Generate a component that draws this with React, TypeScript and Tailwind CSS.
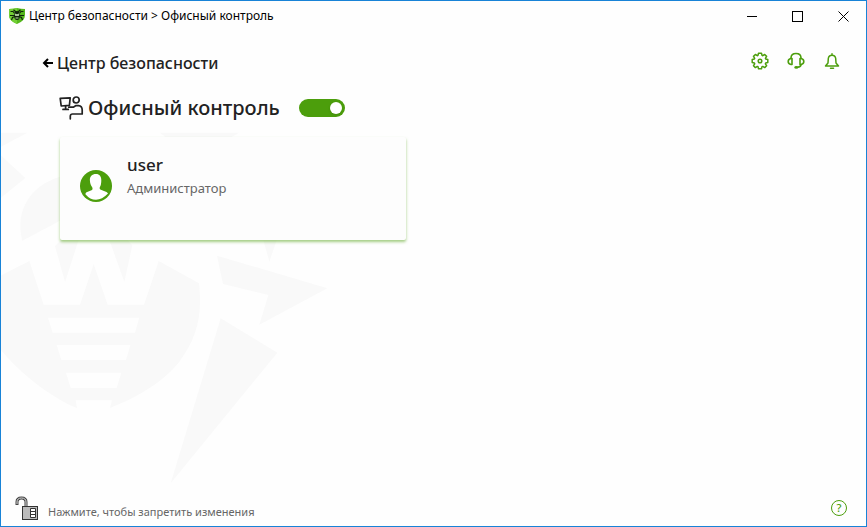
import { useState } from "react";
import type { ReactNode } from "react";

function Watermark() {
  return (
    <svg className="pointer-events-none absolute left-0 top-[131px] h-[352px] w-[328px]" viewBox="3 36 984 1056" fill="#f9f9f9" aria-hidden="true">
      <path d="M0 38H82L0 82Z" />
      <path d="M0 104L76 174L0 236Z" />
      <path d="M67 362C42 270 95 195 180 170V302Z" />
      <path d="M480 38H717L690 54H500Z" />
      <path d="M790 360H830L808 425Z" />
      <path d="M165 378L183 360H236L195 486Z" />
      <path d="M328 360H382L397 376L373 486Z" />
      <path
        fillRule="evenodd"
        d="M0 468L88 423L131 554H240L281 432L323 554H432L476 423L597 490C608 590 590 655 536 728C480 795 400 836 330 864L336 841H227L231 864C150 830 60 760 0 686ZM144 593L158 638H405L418 593ZM170 675L184 720H378L391 675ZM198 758L212 804H350L364 758Z"
      />
      <path d="M651 407L982 505L778 614L805 525L669 492Z" />
      <path d="M662 595L832 698L512 1090Z" />
    </svg>
  );
}

function ShieldLogo() {
  return (
    <svg width="16" height="16" viewBox="0 0 16 16" aria-hidden="true">
      <path d="M0 1Q4 1 8 0Q12 1 16 1V7Q16 13 8 16Q0 13 0 7Z" fill="#55b81c" />
      <path d="M0 1Q4 1 8 0V16Q0 13 0 7Z" fill="#72cf35" />
      <path d="M1.5 3.5L4 3.5L6 6M1 7.5H6M2.5 12L3.5 9.5L6 8.5M14.5 3.5L12 3.5L10 6M15 7.5H10M13.5 12L12.5 9.5L10 8.5M4.5 1.8L7 4M11.5 1.8L9 4" fill="none" stroke="#10240a" strokeWidth="1.2" />
      <ellipse cx="8" cy="7.5" rx="2.8" ry="4.5" fill="#10240a" />
      <path d="M6 5.5L7 8L8 6L9 8L10 5.5M6.5 10H9.5" fill="none" stroke="#d5f7c2" strokeWidth="0.9" />
    </svg>
  );
}

function OfficeIcon() {
  return (
    <svg width="26" height="24" viewBox="0 0 26 24" fill="none" stroke="#222" strokeWidth="1.7" strokeLinejoin="round" strokeLinecap="round" aria-hidden="true">
      <path d="M1.2 2.3L11.2 1.9L10.4 9.4L2.2 10Z" />
      <path d="M6.6 10V13M4 13.4H9.3" />
      <circle cx="17.2" cy="4" r="3" />
      <path d="M9.8 11.200H14.300L17 9.600H19.500Q23.200 10 23.200 14V18H13.500Q11.500 18 11.300 20V22.800" />
    </svg>
  );
}

function GearIcon() {
  return (
    <svg width="18" height="18" viewBox="0 0 18 18" fill="none" stroke="currentColor" strokeWidth="1.5" strokeLinejoin="round" aria-hidden="true">
      <path d="M7.5 1.2H10.5L11 3.400L11.800 3.700L13.700 2.500L15.600 4.400L14.400 6.300L14.700 7L16.800 7.500V10.500L14.700 11L14.400 11.800L15.600 13.700L13.700 15.600L11.800 14.400L11 14.700L10.500 16.800H7.500L7 14.700L6.300 14.400L4.400 15.600L2.500 13.700L3.700 11.800L3.400 11L1.200 10.500V7.500L3.400 7L3.700 6.300L2.500 4.400L4.400 2.500L6.300 3.700L7 3.400Z" />
      <circle cx="9" cy="9" r="1.8" />
    </svg>
  );
}

function HeadsetIcon() {
  return (
    <svg width="18" height="18" viewBox="0 0 18 18" fill="none" stroke="currentColor" strokeWidth="1.6" strokeLinejoin="round" aria-hidden="true">
      <path d="M4 7V6Q4 1.5 9 1.5Q14 1.5 14 6V7" />
      <path d="M5 6.5V12.5H4Q1.2 12 1.2 9.5Q1.2 7 4 6.5ZM13 6.5V12.5H14Q16.8 12 16.8 9.5Q16.8 7 14 6.5Z" />
      <path d="M14 12.5Q14 15 10.5 15.2" />
      <ellipse cx="9.3" cy="15.4" rx="2" ry="1.3" fill="currentColor" stroke="none" />
    </svg>
  );
}

function BellIcon() {
  return (
    <svg width="18" height="18" viewBox="0 0 18 18" fill="none" stroke="currentColor" strokeWidth="1.5" strokeLinejoin="round" strokeLinecap="round" aria-hidden="true">
      <path d="M9 1.8V3M2.5 14H15.5L13 11L12.700 6.500Q12.300 3.200 9 3.200Q5.700 3.200 5.300 6.500L5 11Z" />
      <path d="M7.500 16.200H10.500" />
    </svg>
  );
}

function AvatarIcon() {
  return (
    <svg width="32" height="32" viewBox="0 0 32 32" aria-hidden="true">
      <circle cx="16" cy="16" r="16" fill="#4c9e0c" />
      <path
        d="M16 4C12 4 9.600 6.500 9.900 10.500C10.100 14 11 15.500 12.200 17.200C12.700 18.600 12.800 19.500 11.500 20.200L6.500 22.200Q5.500 22.800 5.400 24.300Q10 29.800 16 29.800Q22 29.800 28 23.600Q27.500 22.500 26.500 22L20.800 19.700C19.500 19 19.500 18 19.800 17.200C21 15.500 21.200 13.500 21.300 10.500C21.400 6.500 19.500 4 16 4Z"
        fill="#fff"
      />
    </svg>
  );
}

function LockIcon() {
  return (
    <svg width="24" height="24" viewBox="0 0 24 24" fill="none" aria-hidden="true">
      <path d="M2 9V6Q2 2 6.500 2Q11 2 11 6V11" stroke="#444" strokeWidth="3" />
      <path d="M2 8V6Q2 2 6.500 2Q11 2 11 6V11" stroke="#ddd" strokeWidth="1" />
      <rect x="7.500" y="10.500" width="15" height="13" fill="#bbb" stroke="#333" />
      <path d="M15.500 12.500H20.500V21.500H15.500ZM15.500 15.500H20.500M15.500 18.500H20.500" fill="#fff" stroke="#333" />
    </svg>
  );
}

function WindowButton({ label, children }: { label: string; children: ReactNode }) {
  return (
    <button type="button" aria-label={label} className="flex w-[46px] items-center justify-center hover:bg-gray-200">
      <svg width="11" height="11" viewBox="0 0 11 11" fill="none" stroke="#000" aria-hidden="true">
        {children}
      </svg>
    </button>
  );
}

export default function App() {
  const [enabled, setEnabled] = useState(true);

  return (
    <div className="relative flex min-h-screen flex-col overflow-hidden border border-[#1883d7] bg-[#fefefe] font-['Noto_Sans','Open_Sans',sans-serif] text-[#222]">
      <Watermark />

      <header className="relative flex h-[30px] justify-between">
        <div className="flex items-center gap-1 pl-2 text-xs text-black">
          <ShieldLogo />
          <span>Центр безопасности &gt; Офисный контроль</span>
        </div>
        <div className="flex">
          <WindowButton label="Свернуть">
            <path d="M1 5.500H11" />
          </WindowButton>
          <WindowButton label="Развернуть">
            <rect x="0.500" y="0.500" width="10" height="10" />
          </WindowButton>
          <WindowButton label="Закрыть">
            <path d="M0.500 0.500L10.500 10.500M10.500 0.500L0.500 10.500" />
          </WindowButton>
        </div>
      </header>

      <main className="relative flex-1 px-[25px]">
        <div className="flex items-center justify-between pt-4 pl-4">
          <button type="button" className="flex items-center gap-[3px] pt-1 text-base font-medium">
            <svg width="12" height="12" viewBox="0 0 12 12" fill="none" stroke="#000" strokeWidth="2" aria-hidden="true">
              <path d="M11 6H2.500M6 2L2 6L6 10" />
            </svg>
            Центр безопасности
          </button>
          <nav className="flex gap-[18px] text-[#4c9e0c]">
            <button type="button" aria-label="Настройки"><GearIcon /></button>
            <button type="button" aria-label="Поддержка"><HeadsetIcon /></button>
            <button type="button" aria-label="Уведомления"><BellIcon /></button>
          </nav>
        </div>

        <div className="mt-[19px] flex items-center gap-[19px] pl-[33px]">
          <h1 className="flex items-center gap-[3px] text-xl font-medium">
            <OfficeIcon />
            Офисный контроль
          </h1>
          <input
            type="checkbox"
            role="switch"
            aria-label="Офисный контроль"
            checked={enabled}
            onChange={(e) => setEnabled(e.target.checked)}
            className="flex h-[18px] w-[46px] cursor-pointer appearance-none items-center rounded-full bg-gray-400 px-[3px] before:size-3 before:rounded-full before:bg-white before:shadow-sm checked:justify-end checked:bg-[#4c9e0c]"
          />
        </div>

        <button type="button" className="mt-[15px] ml-[34px] flex h-[103px] w-full max-w-[346px] items-start rounded-xs bg-[#fdfdfd] px-5 py-4 text-left shadow-[0_2px_3px_#4c9e0c80]">
          <span className="flex items-start gap-[15px]">
            <span className="mt-[17px]"><AvatarIcon /></span>
            <span className="flex flex-col">
              <span className="text-[17px] leading-6 font-medium">user</span>
              <span className="text-[13px] leading-[22px] text-[#666]">Администратор</span>
            </span>
          </span>
        </button>
      </main>

      <footer className="relative flex items-center justify-between pr-[19px] pb-[6px] pl-[14px]">
        <button type="button" className="flex items-end gap-[9px] text-[11px] leading-4 text-[#666]">
          <LockIcon />
          <span>Нажмите, чтобы запретить изменения</span>
        </button>
        <button type="button" aria-label="Справка" className="flex size-4 items-center justify-center rounded-full border border-[#4c9e0c] text-[11px] font-medium text-[#4c9e0c]">
          ?
        </button>
      </footer>
    </div>
  );
}
